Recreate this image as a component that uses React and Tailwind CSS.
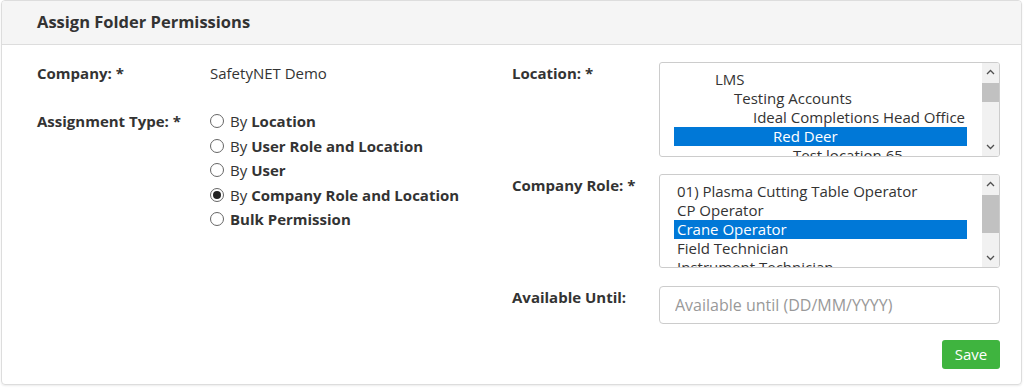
import React from "react";

const font = { fontFamily: '"Open Sans", "Noto Sans", sans-serif' };

function Chevron({ up }) {
  return (
    <svg width="9" height="6" viewBox="0 0 9 6" className="block">
      <path
        d={up ? "M1 5 L4.5 1.5 L8 5" : "M1 1 L4.5 4.5 L8 1"}
        fill="none"
        stroke="#505050"
        strokeWidth="1.3"
      />
    </svg>
  );
}

function Scrollbar({ thumbTop, thumbHeight }) {
  return (
    <div className="relative w-[17px] shrink-0 bg-[#f1f1f1] flex flex-col items-center justify-between py-[6px]">
      <Chevron up />
      <div
        className="absolute left-0 right-0 bg-[#c1c1c1]"
        style={{ top: thumbTop, height: thumbHeight }}
      />
      <Chevron />
    </div>
  );
}

function ListBox({ items, thumbTop, thumbHeight, height }) {
  return (
    <div
      className="flex w-[341px] border border-[#cccccc] rounded-[3px] bg-white overflow-hidden"
      style={{ height }}
    >
      <div className="flex-1 overflow-hidden pt-[7px] pl-[14px] pr-[15px]">
        {items.map((it, i) => (
          <div
            key={i}
            className={
              "h-[19px] leading-[19px] text-[15px] whitespace-nowrap overflow-hidden " +
              (it.selected ? "bg-[#0078d7] text-white" : "text-[#333333]")
            }
            style={{ paddingLeft: 3 + (it.indent || 0) }}
          >
            {it.label}
          </div>
        ))}
      </div>
      <Scrollbar thumbTop={thumbTop} thumbHeight={thumbHeight} />
    </div>
  );
}

function Radio({ checked, prefix, label }) {
  return (
    <label className="flex items-center h-[24.5px] gap-[6px]">
      <span className="w-[14px] h-[14px] rounded-full border border-[#666666] bg-white flex items-center justify-center">
        {checked && <span className="w-[8px] h-[8px] rounded-full bg-[#222222]" />}
      </span>
      <span className="text-[15px] text-[#333333]">
        {prefix && <span className="font-normal">{prefix} </span>}
        <span className="font-bold">{label}</span>
      </span>
    </label>
  );
}

export default function App() {
  return (
    <div className="w-[1024px] h-[388px] bg-white" style={font}>
      <div className="w-[1021px] ml-[1px] h-[385px] border border-[#dddddd] rounded-[4px] shadow-[0_1px_2px_rgba(0,0,0,0.08)] flex flex-col overflow-hidden">
        <div className="h-[44px] bg-[#f5f5f5] border-b border-[#dddddd] flex items-center pl-[35px]">
          <h1 className="font-bold text-[16.5px] text-[#333333]">Assign Folder Permissions</h1>
        </div>
        <div className="flex flex-1 pl-[35px] pr-[21px] pt-[17px]">
          <div className="w-[475px] flex flex-col text-[15px] text-[#333333]">
            <div className="flex h-[20px] leading-[20px] mt-[1px]">
              <div className="w-[173px] font-bold">Company: *</div>
              <div>SafetyNET Demo</div>
            </div>
            <div className="flex mt-[27px]">
              <div className="w-[173px] font-bold leading-[20px] mt-[1px]">Assignment Type: *</div>
              <div className="flex flex-col mt-[-1px]">
                <Radio prefix="By" label="Location" />
                <Radio prefix="By" label="User Role and Location" />
                <Radio prefix="By" label="User" />
                <Radio checked prefix="By" label="Company Role and Location" />
                <Radio label="Bulk Permission" />
              </div>
            </div>
          </div>
          <div className="flex-1 flex flex-col text-[15px] text-[#333333]">
            <div className="flex">
              <div className="w-[147px] font-bold leading-[20px] mt-[1px]">Location: *</div>
              <ListBox
                height={95}
                thumbTop={20}
                thumbHeight={19}
                items={[
                  { label: "LMS", indent: 38 },
                  { label: "Testing Accounts", indent: 57 },
                  { label: "Ideal Completions Head Office", indent: 76 },
                  { label: "Red Deer", indent: 96, selected: true },
                  { label: "Test location 65", indent: 116 },
                ]}
              />
            </div>
            <div className="flex mt-[17px]">
              <div className="w-[147px] font-bold leading-[20px] mt-[1px]">Company Role: *</div>
              <ListBox
                height={94}
                thumbTop={20}
                thumbHeight={38}
                items={[
                  { label: "01) Plasma Cutting Table Operator" },
                  { label: "CP Operator" },
                  { label: "Crane Operator", selected: true },
                  { label: "Field Technician" },
                  { label: "Instrument Technician" },
                ]}
              />
            </div>
            <div className="flex mt-[18px]">
              <div className="w-[147px] font-bold leading-[20px] mt-[1px]">Available Until:</div>
              <input
                className="w-[341px] h-[38px] border border-[#cccccc] rounded-[4px] px-[15px] text-[16px] text-[#333333] placeholder:text-[#999999] outline-none"
                placeholder="Available until (DD/MM/YYYY)"
                style={font}
              />
            </div>
            <div className="flex justify-end mt-[16px]">
              <button className="w-[58px] h-[29px] bg-[#3fb43f] rounded-[3px] text-white text-[15px]">
                Save
              </button>
            </div>
          </div>
        </div>
      </div>
    </div>
  );
}
